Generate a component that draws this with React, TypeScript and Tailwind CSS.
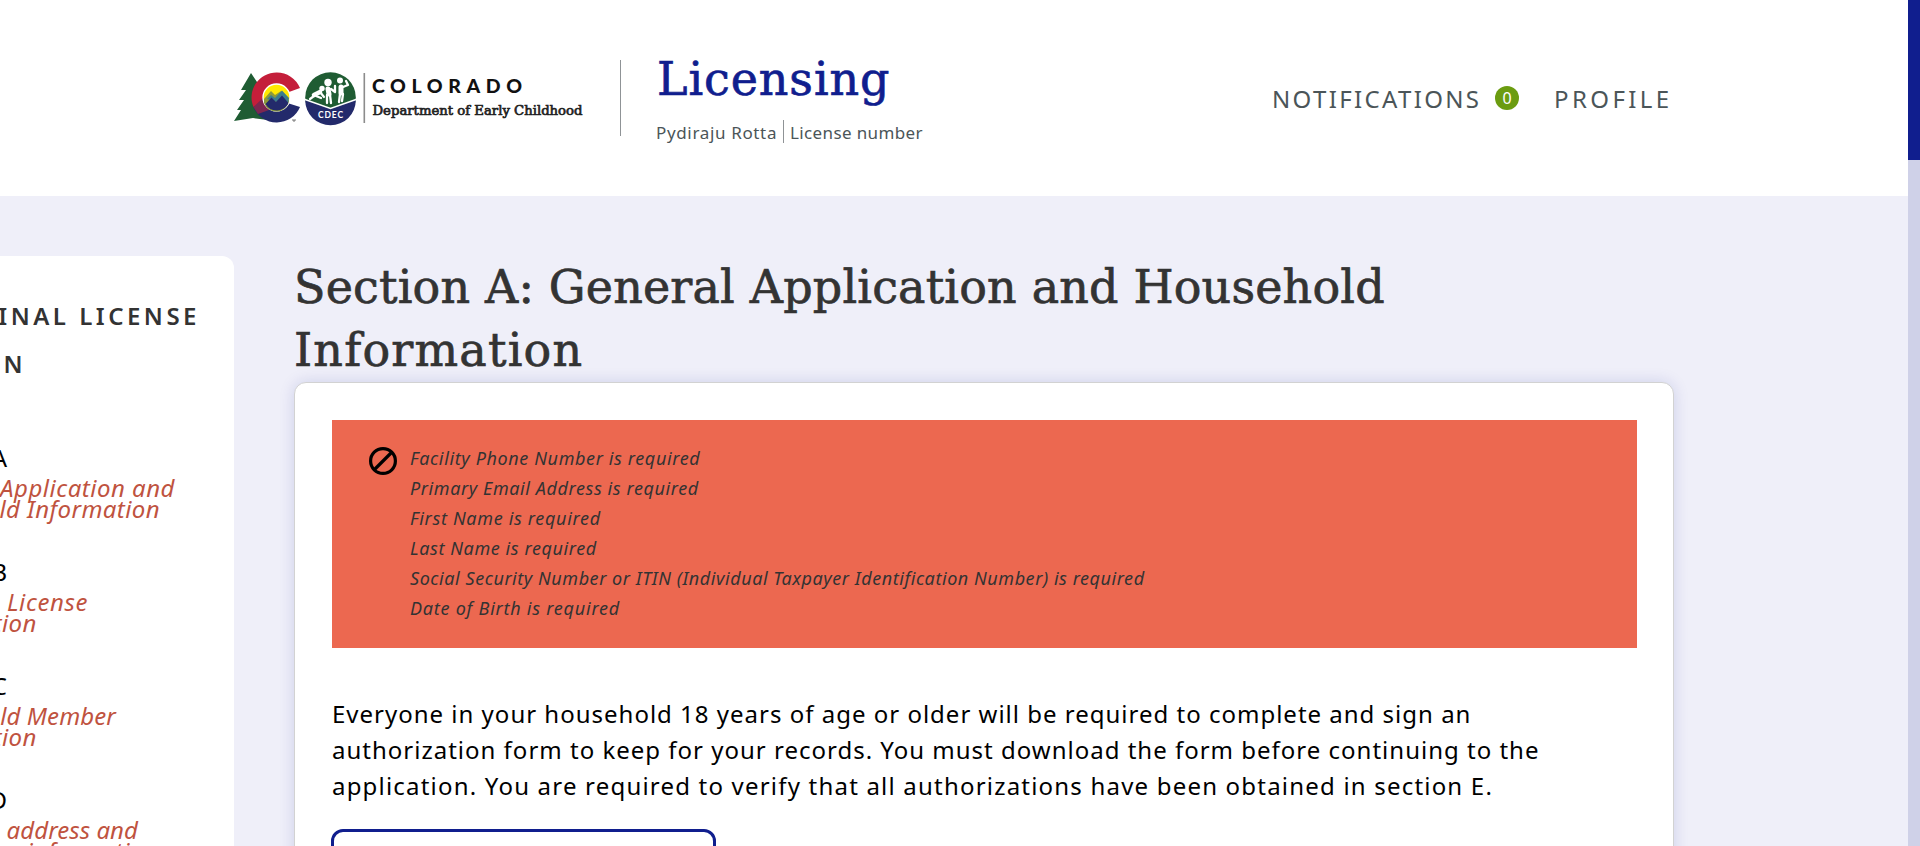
const SANS = "font-['Noto_Sans',sans-serif]";
const SLAB = "font-['DejaVu_Serif',serif] [-webkit-text-stroke:0.7px_currentColor]";

function BrandLogo() {
  return (
    <svg className="h-[54px] w-[352px] shrink-0" viewBox="0 0 352 54" role="img" aria-label="Colorado Department of Early Childhood">
      <path d="M17 1 L25 13 L22 13 L31 26 L27 26 L34 38 L34 48 L19 46 L0 49 L7 38 L3 38 L10 28 L5 28 L12 18 L7 18 Z" fill="#1f5c33" />
      <path d="M66 16 A25 25 0 0 0 42.500 .5 A25 25 0 0 0 19.400 35 L30.500 31 A14 14 0 0 1 55 20 Z" fill="#c41e3a" />
      <path d="M19.400 35 A25 25 0 0 0 42.500 50.500 A25 25 0 0 0 66 35 L55 31.500 L30 31 Z" fill="#232a6b" />
      <path d="M19.400 35 L31 24 L35 38 L24 42 Z" fill="#7d2650" />
      <circle cx="42.500" cy="25.500" r="13.500" fill="#ffe800" stroke="#fff" strokeWidth="1.300" />
      <path d="M30 27 L37 19 L41 23 L47 19 L55 29 A13 13 0 0 1 30 31Z" fill="#8c9a3a" />
      <path d="M33 27 L37 23 L41 26 L48 18.500 L55 26 A13 13 0 0 1 53 33Z" fill="#3c7d8c" />
      <path d="M31.500 32 L37.500 25.500 L42 30 L48 23.500 L54.500 31 A13 13 0 0 1 31.500 32Z" fill="#232a6b" />
      <path d="M58 48h4 M60 48v2" stroke="#555" strokeWidth=".8" />
      <circle cx="96.500" cy="25.500" r="25.300" fill="#1f5c33" />
      <path d="M71.200 28 L96.500 37 L121.800 28 A25.300 25.300 0 0 1 71.200 28 Z" fill="#232a6b" />
      <path d="M71 27.500 L96.500 36.500 L122 27.500" fill="none" stroke="#fff" strokeWidth="1.400" />
      <g fill="none" stroke="#fff" strokeLinecap="round" strokeLinejoin="round">
        <path d="M80 23 L86 20" strokeWidth="4.500" />
        <path d="M80 24 L76 27 M82 24 L87 26 M86 20 L90 25" strokeWidth="2.200" />
        <path d="M94 17 L95 22" strokeWidth="5" />
        <path d="M93 23 L93 31 M96 23 L97 31 M97 17 L101 20 L101 14" strokeWidth="2.300" />
        <path d="M107 15 L107 21" strokeWidth="5" />
        <path d="M106 22 L105 30 M109 22 L108 29 M109 15 L114 13 L112 9" strokeWidth="2.300" />
      </g>
      <circle cx="88" cy="16.500" r="2.700" fill="#fff" />
      <circle cx="94" cy="10.500" r="3.700" fill="#fff" />
      <circle cx="106" cy="8.500" r="3" fill="#fff" />
      <text x="84" y="46" fontFamily="Lato, sans-serif" fontSize="8.500" fontWeight="700" fill="#fff" textLength="25">CDEC</text>
      <rect x="129.500" y="1" width="1.600" height="50" fill="#8c8c8c" />
      <text x="138" y="21" fontFamily="Lato, sans-serif" fontSize="19.500" fontWeight="900" fill="#111" textLength="150">COLORADO</text>
      <text x="138.500" y="43" fontFamily="'DejaVu Serif', serif" fontSize="13.500" fontWeight="400" fill="#222" stroke="#222" strokeWidth=".7" textLength="210" lengthAdjust="spacingAndGlyphs">Department of Early Childhood</text>
    </svg>
  );
}

function Header() {
  return (
    <header className="flex h-[196px] w-[1908px] shrink-0 bg-white pl-[234px]">
      <div className="flex pt-[72px]"><BrandLogo /></div>
      <div className="ml-[34px] mt-[60px] h-[76px] w-px bg-[#8f9396]" />
      <div className="ml-[36px] w-[360px] pt-[47px]">
        <div className={`${SLAB} h-[64px] text-[46px] leading-[64px] tracking-[0.9px] text-[#101e8e]`}>Licensing</div>
        <div className={`${SANS} -ml-px mt-[9px] flex h-[23px] text-[17px] leading-[25px] text-[#4b5558]`}>
          <span className="w-[127px] whitespace-nowrap tracking-[0.65px]">Pydiraju Rotta</span>
          <span className="w-px bg-[#8f9396]" />
          <span className="whitespace-nowrap pl-[6px] tracking-[0.37px]">License number</span>
        </div>
      </div>
      <nav className={`${SANS} ml-[255px] mt-[81px] flex h-[36px] items-center text-[24px] leading-[36px] text-[#4b5558]`}>
        <span className="w-[223px] tracking-[2.35px]">NOTIFICATIONS</span>
        <span className="-mt-0.5 flex size-6 items-center justify-center rounded-full bg-[#6b9c10] text-[16px] text-white">0</span>
        <span className="ml-[35px] tracking-[3.4px]">PROFILE</span>
      </nav>
    </header>
  );
}

const sections = [
  { id: "A", lines: [
    { text: "Application and", end: "w-[175px]", track: "tracking-[0.5px]" },
    { text: "ld Information", end: "w-[160px]", track: "tracking-[0.4px]" },
  ] },
  { id: "B", lines: [
    { text: "License", end: "w-[88px]", track: "tracking-[0.6px]" },
    { text: "tion", end: "w-[37px]", track: "tracking-[0.5px]" },
  ] },
  { id: "C", lines: [
    { text: "ld Member", end: "w-[116px]", track: "tracking-[0.1px]" },
    { text: "tion", end: "w-[37px]", track: "tracking-[0.5px]" },
  ] },
  { id: "D", lines: [
    { text: "address and", end: "w-[138px]", track: "tracking-[0.05px]" },
    { text: "information", end: "w-[158px]", track: "tracking-[0.4px]" },
  ] },
];

function Sidebar() {
  return (
    <aside className={`${SANS} mt-[60px] h-[590px] w-[234px] shrink-0 overflow-hidden rounded-tr-[12px] bg-white pt-[36px]`}>
      <div className="text-[24px] font-semibold leading-[48px] text-[#333]">
        <div className="flex w-[200px] justify-end whitespace-nowrap tracking-[3.5px]">INAL LICENSE</div>
        <div className="flex w-[26px] justify-end whitespace-nowrap tracking-[3.5px]">ON</div>
      </div>
      <div className="mt-[52px]">
        {sections.map((s) => (
          <div key={s.id} className="h-[114px] text-[24px]">
            <div className="flex h-[36px] w-[7px] justify-end leading-[36px] text-black">{s.id}</div>
            <div className="mt-px italic leading-[21px] text-[#bf533f]">
              {s.lines.map((l) => (
                <div key={l.text} className={`flex justify-end whitespace-nowrap ${l.end} ${l.track}`}>{l.text}</div>
              ))}
            </div>
          </div>
        ))}
      </div>
    </aside>
  );
}

const errors = [
  { text: "Facility Phone Number is required", track: "tracking-[0.63px]" },
  { text: "Primary Email Address is required", track: "tracking-[0.6px]" },
  { text: "First Name is required", track: "tracking-[0.68px]" },
  { text: "Last Name is required", track: "tracking-[0.6px]" },
  { text: "Social Security Number or ITIN (Individual Taxpayer Identification Number) is required", track: "tracking-[0.56px]" },
  { text: "Date of Birth is required", track: "tracking-[0.77px]" },
];

function ErrorPanel() {
  return (
    <div className="flex h-[228px] bg-[#ec6850] pl-[37px] pt-[23px]">
      <svg className="mt-1 size-7" viewBox="0 0 28 28" fill="none" stroke="#000" strokeWidth="3.200">
        <circle cx="14" cy="14" r="12.400" />
        <path d="M5.500 22.500 L22.500 5.500" />
      </svg>
      <ul className={`${SANS} ml-[13px] text-[18px] italic leading-[30px] text-[#333]`}>
        {errors.map((e) => <li key={e.text} className={`whitespace-nowrap ${e.track}`}>{e.text}</li>)}
      </ul>
    </div>
  );
}

function MainContent() {
  return (
    <main className="ml-[60px] w-[1380px] shrink-0 pt-[60px]">
      <h1 className={`${SLAB} h-[126px] whitespace-nowrap text-[46px] leading-[63px] text-[#333]`}>
        <span className="block tracking-[0.17px]">Section A: General Application and Household</span>
        <span className="block tracking-[1.2px]">Information</span>
      </h1>
      <div className="h-[520px] rounded-[12px] border border-[#d2d2d2] bg-white pl-[37px] pr-[36px] pt-[37px] shadow-[0_0_16px_rgba(16,30,142,0.14)]">
        <ErrorPanel />
        <p className={`${SANS} mt-[48px] whitespace-nowrap text-[24px] leading-[36px] text-black`}>
          <span className="block tracking-[1px]">Everyone in your household 18 years of age or older will be required to complete and sign an</span>
          <span className="block tracking-[1px]">authorization form to keep for your records. You must download the form before continuing to the</span>
          <span className="block tracking-[1.2px]">application. You are required to verify that all authorizations have been obtained in section E.</span>
        </p>
        <button type="button" aria-label="Download form" className="-ml-px mt-[25px] block h-[72px] w-[385px] rounded-[12px] border-3 border-[#101e8e] bg-white" />
      </div>
    </main>
  );
}

export default function App() {
  return (
    <div className="flex h-[846px] w-[1920px] overflow-hidden bg-[#efeff9]">
      <div className="flex h-full w-[1908px] flex-col overflow-hidden">
        <Header />
        <div className="flex">
          <Sidebar />
          <MainContent />
        </div>
      </div>
      <div className="h-full w-3 shrink-0 bg-[#cfd1e8]">
        <div className="h-[160px] bg-[#101e8e]" />
      </div>
    </div>
  );
}
